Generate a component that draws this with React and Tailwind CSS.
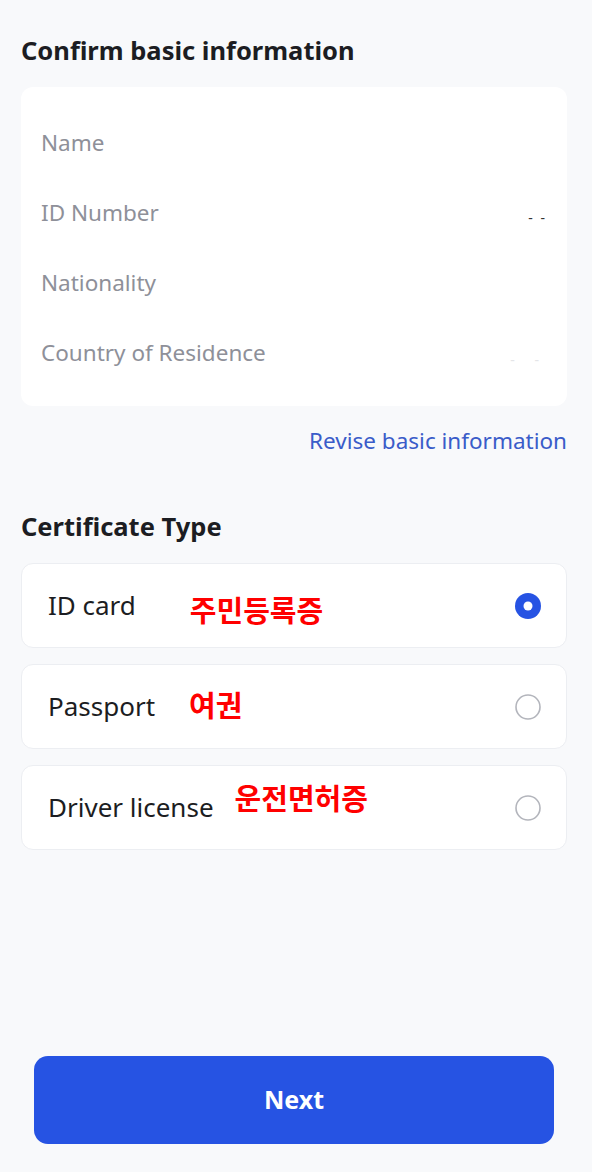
import React, { useState } from "react";

const font = { fontFamily: '"Noto Sans", "Noto Sans CJK KR", sans-serif' };

export default function App() {
  const [selected, setSelected] = useState("id");

  const options = [
    { id: "id", label: "ID card", note: "주민등록증", noteClass: "ml-[54px] mt-2" },
    { id: "passport", label: "Passport", note: "여권", noteClass: "ml-[34px] -mt-1" },
    { id: "driver", label: "Driver license", note: "운전면허증", noteClass: "ml-[21px] -mt-5" },
  ];

  return (
    <div
      className="min-h-[1172px] w-[592px] bg-[#f8f9fb] flex flex-col pl-[21px] pr-[25px] pt-[30px] pb-[28px]"
      style={font}
    >
      <h1 className="text-[25.5px] font-bold text-[#1c1d22] leading-[40px]">Confirm basic information</h1>

      {/* Basic info */}
      <div className="mt-[17px] bg-white rounded-[12px] px-5 pt-[41px] pb-[38px] flex flex-col gap-[40px]">
        <InfoRow label="Name" />
        <InfoRow label="ID Number" value="- -" />
        <InfoRow label="Nationality" />
        <InfoRow label="Country of Residence" faint />
      </div>

      <div className="mt-[20px] flex justify-end">
        <span className="text-[22.5px] text-[#3a5cc9] leading-[30px]">Revise basic information</span>
      </div>

      <h2 className="mt-[53px] text-[25.5px] font-bold text-[#1c1d22] leading-[34px]">Certificate Type</h2>

      <div className="mt-[20px] flex flex-col gap-[16px]">
        {options.map(o => (
          <button
            key={o.id}
            onClick={() => setSelected(o.id)}
            className="h-[85px] bg-white border border-[#eceef2] rounded-[12px] pl-[26px] pr-[25px] flex items-center text-left"
          >
            <span className="text-[26px] text-[#1c1d22]">{o.label}</span>
            <span
              className={"text-[29px] font-bold text-[#ff0000] " + o.noteClass}
              style={{ fontFamily: '"Noto Sans CJK KR", sans-serif' }}
            >
              {o.note}
            </span>
            <span className="ml-auto">
              <Radio checked={selected === o.id} />
            </span>
          </button>
        ))}
      </div>

      <div className="flex-1" />

      <button className="mx-[13px] h-[88px] rounded-[14px] bg-[#2653e3] text-white text-[25px] font-bold">
        Next
      </button>
    </div>
  );
}

function InfoRow({ label, value, faint }) {
  return (
    <div className="flex items-center justify-between h-[30px]">
      <span className="text-[22.5px] text-[#8e9099]">{label}</span>
      {value && <span className="text-[14px] text-[#333] mt-2 tracking-[2px]">{value}</span>}
      {faint && <span className="text-[14px] text-[#e4e5e8] mt-3 tracking-[8px]">- -</span>}
    </div>
  );
}

function Radio({ checked }) {
  return checked ? (
    <svg width="26" height="26" viewBox="0 0 26 26">
      <circle cx="13" cy="13" r="13" fill="#2653e3" />
      <circle cx="13" cy="13" r="4.5" fill="#fff" />
    </svg>
  ) : (
    <svg width="26" height="26" viewBox="0 0 26 26">
      <circle cx="13" cy="13" r="12" fill="none" stroke="#b3b5bc" strokeWidth="1.6" />
    </svg>
  );
}
